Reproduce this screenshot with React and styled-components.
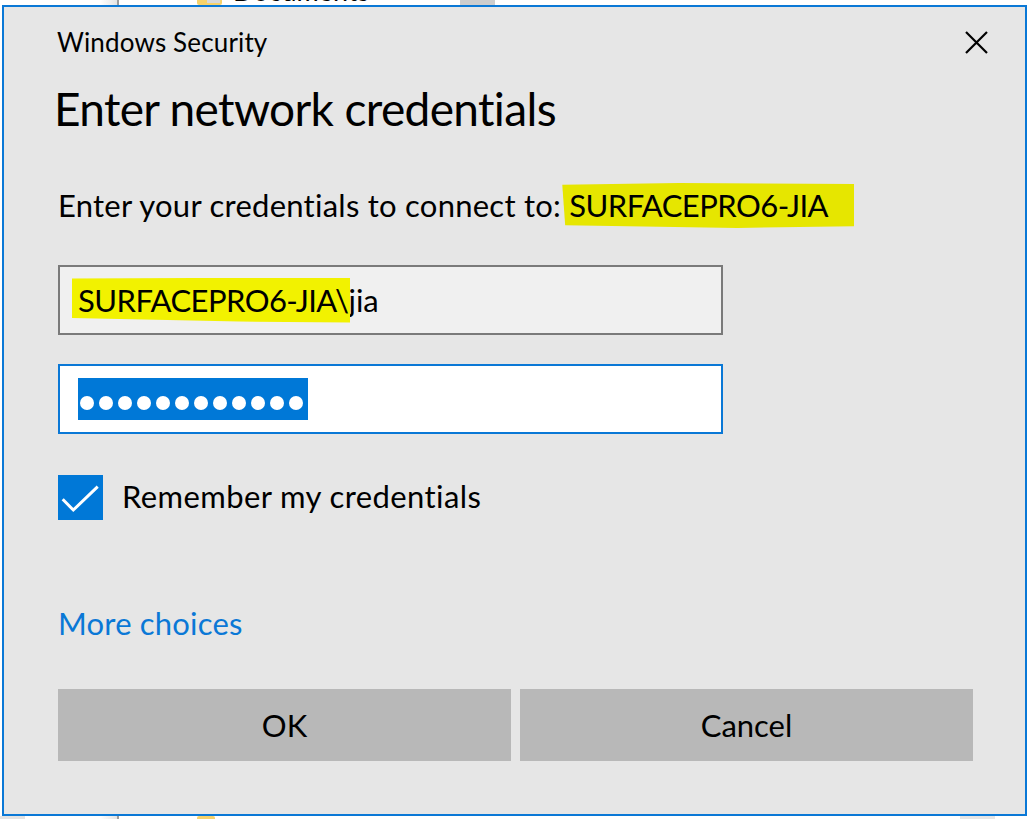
import React from 'react';
import styled, { createGlobalStyle } from 'styled-components';

const FONT = `Lato, "Segoe UI", "Noto Sans", sans-serif`;

const GlobalStyle = createGlobalStyle`
  html, body { margin: 0; padding: 0; background: #fff; }
  body { font-family: ${FONT}; -webkit-font-smoothing: antialiased; }
  * { box-sizing: border-box; }
`;

const Desktop = styled.div`
  position: relative;
  width: 1032px;
  height: 819px;
  overflow: hidden;
  background: #fff;
  padding: 5px 5px 0 2px;
`;

/* ---- things of the explorer window peeking out behind the dialog ---- */
const PaneShade = styled.div`
  position: absolute;
  top: 0;
  bottom: 0;
  left: 100px;
  width: 17px;
  background: linear-gradient(to right, #fff, #e4e4e4);
`;
const PaneLine = styled.div`
  position: absolute;
  top: 0;
  bottom: 0;
  left: 117px;
  width: 2px;
  background: #9c9c9c;
`;
const Folder = styled.div`
  position: absolute;
  left: 197px;
  top: ${(p) => p.$top}px;
  width: ${(p) => p.$w}px;
  height: 20px;
  background: #f6d26b;
  border-radius: 2px;
  &::after {
    content: '';
    position: absolute;
    left: 10px;
    right: 2px;
    bottom: 2px;
    height: 5px;
    background: #d8d8d8;
  }
`;
const FileName = styled.div`
  position: absolute;
  left: 233px;
  top: ${(p) => p.$top}px;
  font-family: ${FONT};
  font-size: 27px;
  line-height: 30px;
  color: #000;
  white-space: nowrap;
`;
const GreyBlock = styled.div`
  position: absolute;
  left: ${(p) => p.$left}px;
  top: ${(p) => p.$top}px;
  width: ${(p) => p.$w}px;
  height: ${(p) => p.$h}px;
  background: ${(p) => p.$c};
`;

/* ---- dialog ---- */
const Dialog = styled.div`
  position: relative;
  z-index: 1;
  width: 1025px;
  height: 811px;
  border: 2px solid #0a78d6;
  background: #e6e6e6;
  padding: 0 52px 0 54px;
  display: flex;
  flex-direction: column;
  font-family: ${FONT};
  color: #000;
`;

const TitleBar = styled.div`
  display: flex;
  align-items: center;
  height: 70px;
  margin-right: -50px;
`;
const Caption = styled.div`
  flex: 1;
  font-size: 26px;
  margin-left: -1px;
  letter-spacing: 0.15px;
`;
const CloseButton = styled.div`
  width: 93px;
  height: 70px;
  display: flex;
  align-items: center;
  justify-content: center;
`;

const Heading = styled.h1`
  margin: 0 0 0 -4px;
  height: 63px;
  font-size: 46px;
  line-height: 63px;
  font-weight: 400;
  letter-spacing: -0.65px;
`;

const Prompt = styled.p`
  margin: 40px 0 0 0;
  height: 50px;
  font-size: 31px;
  line-height: 50px;
  white-space: nowrap;
  letter-spacing: 0.25px;
`;

const Marker = styled.span`
  display: inline-block;
  position: relative;
  line-height: ${(p) => p.$h}px;
  padding: 0 ${(p) => p.$r}px 0 ${(p) => p.$l}px;
  margin: 0 -${(p) => p.$r}px 0 -${(p) => p.$l}px;
  background: ${(p) => p.$c};
  clip-path: ${(p) => p.$clip};
  letter-spacing: -0.55px;
`;

const Field = styled.div`
  margin-top: ${(p) => p.$mt}px;
  width: 665px;
  height: 70px;
  border: 2px solid ${(p) => (p.$focused ? '#0a78d6' : '#7a7a7a')};
  background: ${(p) => (p.$focused ? '#fff' : '#f0f0f0')};
  display: flex;
  align-items: center;
  padding-left: 18px;
  font-size: 31px;
  white-space: nowrap;
`;

const Selection = styled.div`
  display: flex;
  align-items: center;
  gap: 5px;
  height: 42px;
  padding: 8px 5px 0 2px;
  background: #0078d7;
`;
const Dot = styled.span`
  width: 14px;
  height: 14px;
  border-radius: 50%;
  background: #fff;
`;

const CheckRow = styled.div`
  margin-top: 41px;
  height: 45px;
  display: flex;
  align-items: center;
  gap: 19px;
`;
const CheckBox = styled.div`
  width: 45px;
  height: 45px;
  background: #0078d7;
  flex: none;
`;
const CheckLabel = styled.span`
  font-size: 31px;
  letter-spacing: 0.4px;
  margin-top: -4px;
`;

const MoreLink = styled.a`
  margin-top: 83px;
  height: 40px;
  line-height: 40px;
  font-size: 31px;
  color: #0a78d6;
  text-decoration: none;
  align-self: flex-start;
  letter-spacing: 0.2px;
`;

const Buttons = styled.div`
  margin-top: 46px;
  display: grid;
  grid-template-columns: 1fr 1fr;
  gap: 9px;
`;
const Button = styled.div`
  height: 72px;
  background: #b8b8b8;
  display: flex;
  align-items: center;
  justify-content: center;
  font-size: 31px;
`;

export default function App() {
  return (
    <>
      <GlobalStyle />
      <Desktop>
        <PaneShade />
        <PaneLine />
        <Folder $top={-15} $w={25} />
        <FileName $top={-24}>Documents</FileName>
        <GreyBlock $left={460} $top={0} $w={35} $h={6} $c="#cdcdcd" />
        <GreyBlock $left={0} $top={816} $w={25} $h={3} $c="#e3e3e3" />
        <Folder $top={816} $w={18} />
        <FileName $top={815}>Output.png</FileName>
        <GreyBlock $left={960} $top={816} $w={35} $h={3} $c="#e6e6e6" />

        <Dialog>
          <TitleBar>
            <Caption>Windows Security</Caption>
            <CloseButton>
              <svg width="23" height="23" viewBox="0 0 23 23">
                <path d="M1 1 L22 22 M22 1 L1 22" stroke="#000" strokeWidth="2.2" fill="none" />
              </svg>
            </CloseButton>
          </TitleBar>

          <Heading>Enter network credentials</Heading>

          <Prompt>
            Enter your credentials to connect to:{' '}
            <Marker
              $h={45}
              $l={7}
              $r={26}
              $c="#e6e600"
              $clip="polygon(0 4%, 40% 0, 100% 2%, 100% 96%, 60% 100%, 1% 94%)"
            >
              SURFACEPRO6-JIA
            </Marker>
          </Prompt>

          <Field $mt={35}>
            <Marker
              $h={45}
              $l={6}
              $r={2}
              $c="#f2f200"
              $clip="polygon(0 2%, 100% 0, 100% 100%, 60% 98%, 0 90%)"
            >
              SURFACEPRO6-JIA\
            </Marker>
            jia
          </Field>

          <Field $mt={29} $focused>
            <Selection>
              {Array.from({ length: 12 }).map((_, i) => (
                <Dot key={i} />
              ))}
            </Selection>
          </Field>

          <CheckRow>
            <CheckBox>
              <svg width="45" height="45" viewBox="0 0 45 45">
                <polyline
                  points="4.7,24.3 15.3,35 39.7,11.7"
                  stroke="#fff"
                  strokeWidth="3"
                  fill="none"
                />
              </svg>
            </CheckBox>
            <CheckLabel>Remember my credentials</CheckLabel>
          </CheckRow>

          <MoreLink>More choices</MoreLink>

          <Buttons>
            <Button>OK</Button>
            <Button>Cancel</Button>
          </Buttons>
        </Dialog>
      </Desktop>
    </>
  );
}
